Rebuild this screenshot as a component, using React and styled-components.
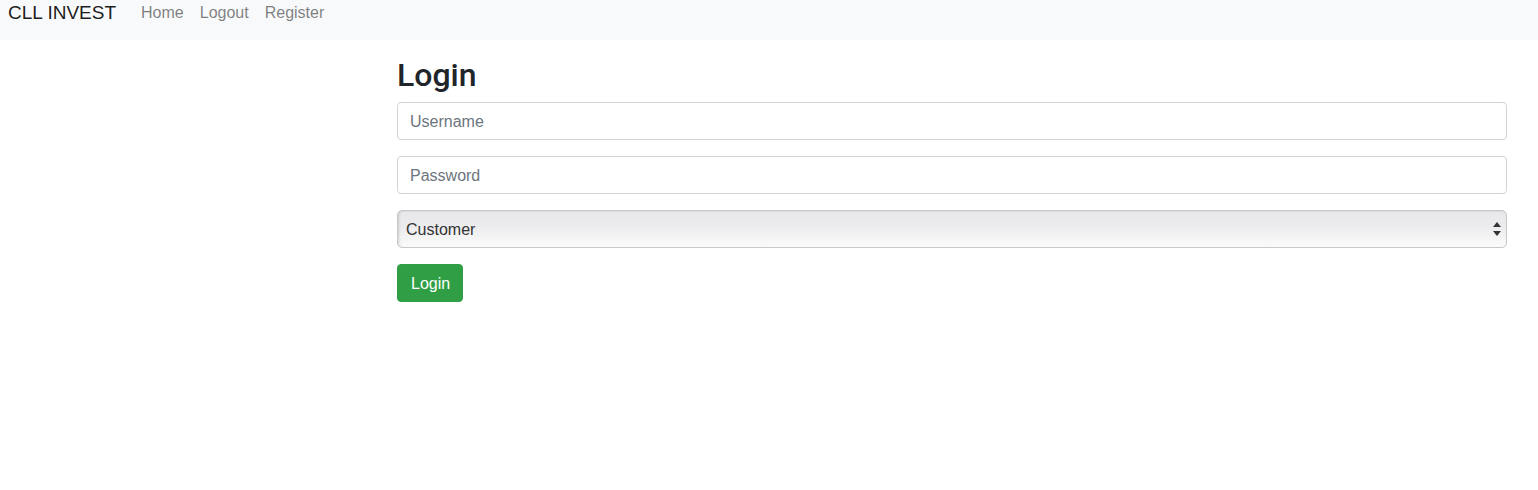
import { createGlobalStyle, styled } from 'styled-components';

const Global = createGlobalStyle`
  body {
    margin: 0;
    font-family: "Liberation Sans", Arial, sans-serif;
    color: #212529;
    background: #fff;
  }
  * { box-sizing: border-box; }
`

const Nav = styled.nav`
  display: flex;
  align-items: flex-start;
  height: 40px;
  padding: 0 8px;
  background-color: #f8f9fa;
`
const Brand = styled.a`
  font-size: 19px;
  line-height: 25px;
  color: rgba(0, 0, 0, 0.9);
  margin-right: 17px;
  text-decoration: none;
`
const NavLink = styled.a`
  font-size: 16px;
  line-height: 25px;
  padding: 0 8px;
  color: rgba(0, 0, 0, 0.5);
  text-decoration: none;
`
const Main = styled.div`
  padding: 16px 31px 0 397px;
`
const Title = styled.h2`
  margin: 0 0 8px;
  font-family: Roboto, "Liberation Sans", Arial, sans-serif;
  font-size: 32px;
  font-weight: 500;
  line-height: 38px;
`
const Form = styled.form`
  display: flex;
  flex-direction: column;
  gap: 16px;
  align-items: flex-start;
`
const Input = styled.input`
  width: 100%;
  height: 38px;
  padding: 7px 12px 5px;
  font-family: inherit;
  font-size: 16px;
  color: #495057;
  border: 1px solid #ced4da;
  border-radius: 4px;
  outline: none;
  &::placeholder { color: #6c757d; }
`
const SelectWrap = styled.div`
  position: relative;
  width: 100%;
`
const Select = styled.select`
  width: 100%;
  height: 38px;
  padding: 6px 8px;
  font-family: inherit;
  font-size: 16px;
  color: #333;
  appearance: none;
  border: 1px solid #c6c8cc;
  border-radius: 5px;
  background: linear-gradient(#e8e8ea 0%, #ececee 45%, #fbfbfb 100%);
  box-shadow: inset 3px 0 3px -2px rgba(0,0,0,0.15), inset 0 1px 1px rgba(0,0,0,0.05);
`
const Arrows = styled.svg`
  position: absolute;
  right: 6px;
  top: 12px;
  pointer-events: none;
`
const Button = styled.button`
  height: 38px;
  padding: 7px 12px 5px 13px;
  font-family: inherit;
  font-size: 16px;
  color: #fff;
  background-color: #2f9e44;
  border: 1px solid #2f9e44;
  border-radius: 4px;
  cursor: pointer;
`

const App = () => {
  return (
    <>
      <Global />
      <Nav>
        <Brand href="#">CLL INVEST</Brand>
        <NavLink href="#">Home</NavLink>
        <NavLink href="#">Logout</NavLink>
        <NavLink href="#">Register</NavLink>
      </Nav>
      <Main>
        <Title>Login</Title>
        <Form onSubmit={(e) => e.preventDefault()}>
          <Input placeholder="Username" />
          <Input type="password" placeholder="Password" />
          <SelectWrap>
            <Select defaultValue="customer">
              <option value="customer">Customer</option>
              <option value="admin">Admin</option>
            </Select>
            <Arrows width="8" height="14" viewBox="0 0 8 14">
              <path d="M4 0 L8 5 H0 Z" fill="#333" />
              <path d="M0 9 H8 L4 14 Z" fill="#333" />
            </Arrows>
          </SelectWrap>
          <Button type="submit">Login</Button>
        </Form>
      </Main>
    </>
  )
}

export default App
